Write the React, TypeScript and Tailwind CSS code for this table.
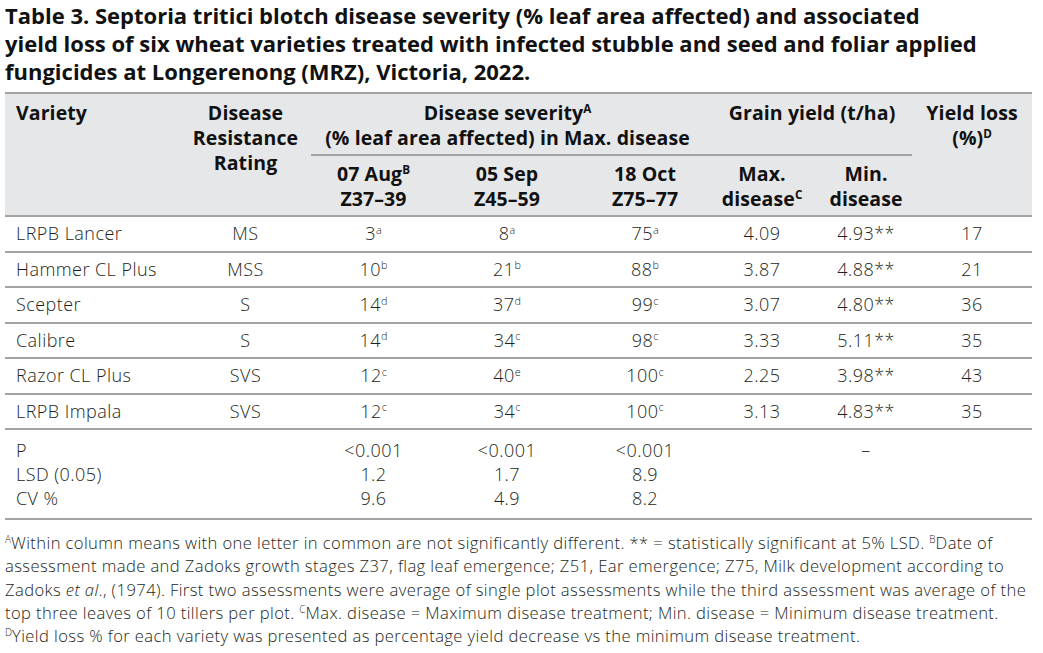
import type { ReactNode } from "react";

type Cell = string | [string, string];

const rows: Cell[][] = [
  ["LRPB Lancer", "MS", ["3", "a"], ["8", "a"], ["75", "a"], "4.09", "4.93**", "17"],
  ["Hammer CL Plus", "MSS", ["10", "b"], ["21", "b"], ["88", "b"], "3.87", "4.88**", "21"],
  ["Scepter", "S", ["14", "d"], ["37", "d"], ["99", "c"], "3.07", "4.80**", "36"],
  ["Calibre", "S", ["14", "d"], ["34", "c"], ["98", "c"], "3.33", "5.11**", "35"],
  ["Razor CL Plus", "SVS", ["12", "c"], ["40", "e"], ["100", "c"], "2.25", "3.98**", "43"],
  ["LRPB Impala", "SVS", ["12", "c"], ["34", "c"], ["100", "c"], "3.13", "4.83**", "35"],
];

const stats = [
  { label: "P", aug: "<0.001", sep: "<0.001", oct: "<0.001", min: "–" },
  { label: "LSD (0.05)", aug: "1.2", sep: "1.7", oct: "8.9", min: "" },
  { label: "CV %", aug: "9.6", sep: "4.9", oct: "8.2", min: "" },
];

function Sup({ children }: { children: ReactNode }) {
  return <sup className="text-[0.6em] top-[-0.6em] tracking-normal">{children}</sup>;
}

function Value({ v }: { v: Cell }) {
  if (typeof v === "string") return <>{v}</>;
  return (
    <>
      {v[0]}
      <Sup>{v[1]}</Sup>
    </>
  );
}

export default function App() {
  return (
    <div
      className="w-[1043px] h-[653px] overflow-hidden bg-white text-[#231f20] pl-[5px]"
      style={{ fontFamily: '"Open Sans", "Noto Sans", sans-serif' }}
    >
      {/* Caption */}
      <h1 className="text-[22px] leading-[28px] font-bold text-[#111] pt-[1px] whitespace-nowrap">
        Table 3. Septoria tritici blotch disease severity (% leaf area affected) and associated
        <br />
        yield loss of six wheat varieties treated with infected stubble and seed and foliar applied
        <br />
        fungicides at Longerenong (MRZ), Victoria, 2022.
      </h1>

      <table className="mt-[7px] w-[1027px] table-fixed border-collapse text-[18px] tracking-[0.45px] whitespace-nowrap">
        <colgroup>
          <col className="w-[175px]" />
          <col className="w-[131px]" />
          <col className="w-[125px]" />
          <col className="w-[142px]" />
          <col className="w-[134px]" />
          <col className="w-[100px]" />
          <col className="w-[100px]" />
          <col className="w-[120px]" />
        </colgroup>
        <thead className="bg-[#e6e7e8] font-bold text-[19.5px] tracking-[0.1px] leading-[25px] text-[#111]">
          <tr className="border-t-2 border-[#a3a3a3]">
            <th rowSpan={2} className="align-top text-left pl-[11px] pt-[6px] font-bold">
              Variety
            </th>
            <th rowSpan={2} className="align-top text-center pt-[6px] font-bold">
              Disease
              <br />
              Resistance
              <br />
              Rating
            </th>
            <th colSpan={3} className="align-top text-center pt-[6px] pb-[4px] pr-[8px] font-bold border-b-2 border-[#a3a3a3]">
              Disease severity<Sup>A</Sup>
              <br />
              (% leaf area affected) in Max. disease
            </th>
            <th colSpan={2} className="align-top text-center pt-[6px] font-bold border-b-2 border-[#a3a3a3]">
              Grain yield (t/ha)
            </th>
            <th rowSpan={2} className="align-top text-center pt-[6px] font-bold">
              Yield loss
              <br />
              (%)<Sup>D</Sup>
            </th>
          </tr>
          <tr>
            <th className="text-center pt-[5px] pb-[4px] font-bold">
              07 Aug<Sup>B</Sup>
              <br />
              Z37–39
            </th>
            <th className="text-center pt-[5px] pb-[4px] font-bold">
              05 Sep
              <br />
              Z45–59
            </th>
            <th className="text-center pt-[5px] pb-[4px] font-bold">
              18 Oct
              <br />
              Z75–77
            </th>
            <th className="text-center pt-[5px] pb-[4px] font-bold">
              Max.
              <br />
              disease<Sup>C</Sup>
            </th>
            <th className="text-center pt-[5px] pb-[4px] pl-2 font-bold">
              Min.
              <br />
              disease
            </th>
          </tr>
        </thead>
        <tbody className="font-light">
          {rows.map((r, i) => (
            <tr key={i} className="border-t-2 border-[#a3a3a3] h-[35.5px]">
              {r.map((c, j) => (
                <td
                  key={j}
                  className={
                    j === 0
                      ? "text-left pl-[11px] py-0"
                      : j === 6
                        ? "text-center pl-2 py-0"
                        : "text-center py-0"
                  }
                >
                  <Value v={c} />
                </td>
              ))}
            </tr>
          ))}
          {stats.map((s, i) => (
            <tr
              key={s.label}
              className={
                i === 0
                  ? "border-t-2 border-[#a3a3a3] leading-[24px]"
                  : i === stats.length - 1
                    ? "border-b-2 border-[#a3a3a3] leading-[24px]"
                    : "leading-[24px]"
              }
            >
              <td className={i === 0 ? "pl-[11px] pt-[8px]" : i === stats.length - 1 ? "pl-[11px] pb-[8px]" : "pl-[11px]"}>
                {s.label}
              </td>
              <td />
              <td className={i === 0 ? "text-center pt-[8px]" : i === stats.length - 1 ? "text-center pb-[8px]" : "text-center"}>
                {s.aug}
              </td>
              <td className={i === 0 ? "text-center pt-[8px]" : i === stats.length - 1 ? "text-center pb-[8px]" : "text-center"}>
                {s.sep}
              </td>
              <td className={i === 0 ? "text-center pt-[8px]" : i === stats.length - 1 ? "text-center pb-[8px]" : "text-center"}>
                {s.oct}
              </td>
              <td />
              <td className={i === 0 ? "text-center pl-2 pt-[8px]" : "text-center pl-2"}>{s.min}</td>
              <td />
            </tr>
          ))}
        </tbody>
      </table>

      {/* Footnotes */}
      <p className="mt-[11px] text-[16.6px] leading-[23.3px] font-light whitespace-nowrap tracking-[0.4px]">
        <Sup>A</Sup>Within column means with one letter in common are not significantly different. ** = statistically
        significant at 5% LSD. <Sup>B</Sup>Date of
        <br />
        assessment made and Zadoks growth stages Z37, flag leaf emergence; Z51, Ear emergence; Z75, Milk development
        according to
        <br />
        Zadoks <i>et al</i>., (1974). First two assessments were average of single plot assessments while the third
        assessment was average of the
        <br />
        top three leaves of 10 tillers per plot. <Sup>C</Sup>Max. disease = Maximum disease treatment; Min. disease =
        Minimum disease treatment.
        <br />
        <Sup>D</Sup>Yield loss % for each variety was presented as percentage yield decrease vs the minimum disease
        treatment.
      </p>
    </div>
  );
}
